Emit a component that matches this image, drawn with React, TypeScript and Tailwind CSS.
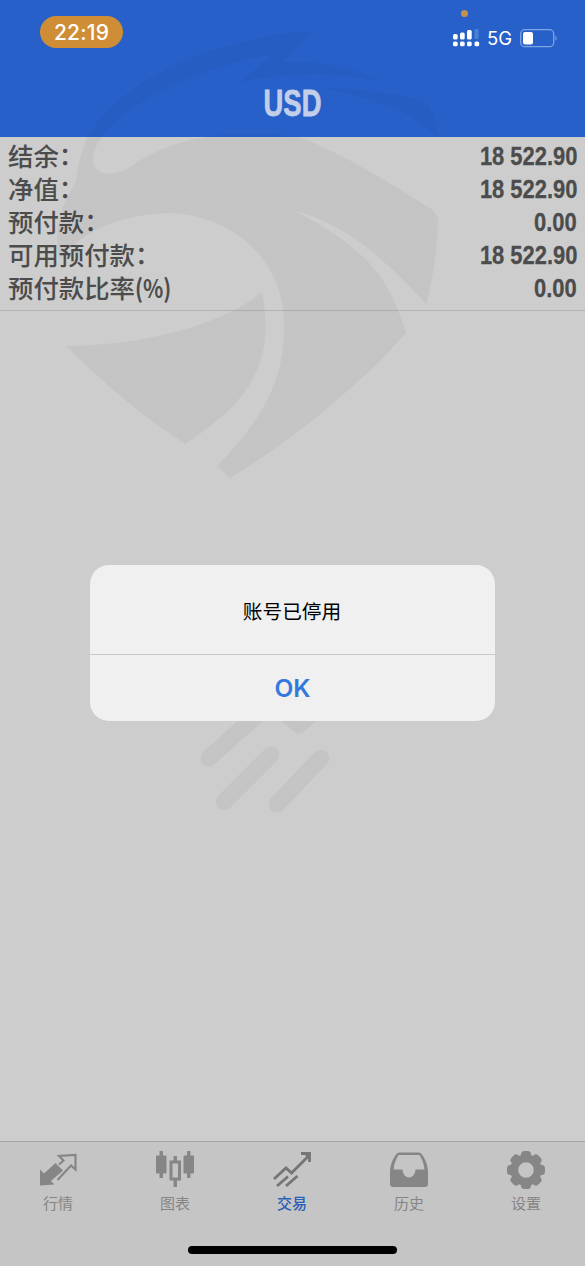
import React from 'react';

interface AccountRow {
  label: string;
  suffix: string;
  value: string;
}

const rows: AccountRow[] = [
  { label: '结余', suffix: '：', value: '18 522.90' },
  { label: '净值', suffix: '：', value: '18 522.90' },
  { label: '预付款', suffix: '：', value: '0.00' },
  { label: '可用预付款', suffix: '：', value: '18 522.90' },
  { label: '预付款比率', suffix: '(%)', value: '0.00' },
];

const QuotesIcon: React.FC = () => (
  <svg width="40" height="40" viewBox="0 2 40 40" fill="none">
    <path d="M2 21.5L6 25.5L17.5 15L25 22.5L13 33L16.5 36.5L2 37.5Z" fill="#868686" />
    <path d="M19.5 32L33 17.5L37.5 21.5V7L21 8L25.5 12.5L21 16.5" stroke="#868686" strokeWidth="2.2" />
  </svg>
);

const ChartIcon: React.FC = () => (
  <svg width="40" height="40" viewBox="0 2 40 40" fill="none">
    <path d="M6.25 3V30M33.75 3V30M20.25 8V14M20.25 32V39" stroke="#868686" strokeWidth="3.4" />
    <rect x="1" y="7.500" width="10.5" height="18" rx="1" fill="#868686" />
    <rect x="28.5" y="7.500" width="10.5" height="18" rx="1" fill="#868686" />
    <rect x="16" y="14" width="8.5" height="17" stroke="#868686" strokeWidth="3" />
  </svg>
);

const TradeIcon: React.FC = () => (
  <svg width="40" height="40" viewBox="0 2 40 40" fill="none" stroke="#757575" strokeWidth="2.8">
    <path d="M2 31L14 20L19.5 25L37 7.5M29 5.5H37.5V14M5 38L16 28.5M14 38L25.5 28" />
    <path d="M31 5H38V12Z" fill="#757575" stroke="none" />
  </svg>
);

const HistoryIcon: React.FC = () => (
  <svg width="40" height="40" viewBox="0 2 40 40" fill="#868686">
    <path
      fillRule="evenodd"
      d="M7.5 6Q8.2 4.5 10 4.5H30Q31.8 4.5 32.5 6C36.5 11 39 18 39 24V36Q39 39 36 39H4Q1 39 1 36V24C1 18 3.5 11 7.5 6ZM9.5 7C7 11 5 16 4.5 21.5H13.5C14 32 26 32 26.5 21.5H35.5C35 16 33 11 30.5 7Z"
    />
  </svg>
);

const SettingsIcon: React.FC = () => (
  <svg width="40" height="40" viewBox="-20 -20 40 40">
    <circle r="11.8" fill="none" stroke="#868686" strokeWidth="8" />
    {[0, 45, 90, 135, 180, 225, 270, 315].map((angle) => (
      <rect key={angle} x="-5" y="-19" width="10" height="7" rx="3.5" fill="#868686" transform={`rotate(${angle})`} />
    ))}
  </svg>
);

const tabs = [
  { label: '行情', icon: <QuotesIcon />, active: false },
  { label: '图表', icon: <ChartIcon />, active: false },
  { label: '交易', icon: <TradeIcon />, active: true },
  { label: '历史', icon: <HistoryIcon />, active: false },
  { label: '设置', icon: <SettingsIcon />, active: false },
];

const StatusBar: React.FC = () => (
  <div className="flex h-[70px] items-start justify-between pl-10 pr-[26px]">
    <div className="mt-4 flex h-8 w-[83px] items-center justify-center rounded-full bg-[#cf8d35] pt-px font-['Inter','Liberation_Sans',sans-serif] text-[21px] font-medium tracking-[0.2px] text-white">
      22:19
    </div>
    <div className="flex flex-col">
      <div className="ml-2 mt-[10px] h-[7px] w-[7px] rounded-full bg-[#c2914f]" />
      <div className="mt-[9px] flex h-6 items-center">
        <svg width="27" height="18" viewBox="0 0 27 18" fill="#fff">
          <rect x="0" y="5" width="4.7" height="5.5" rx="1.5" />
          <rect x="7" y="3.5" width="4.7" height="7" rx="1.5" />
          <rect x="14" y="1" width="4.7" height="9.5" rx="1.5" />
          <rect x="21.5" y="0" width="4" height="10" rx="1" fill="#4a80d4" />
          <rect x="0" y="12.5" width="4.7" height="4.7" rx="1.5" />
          <rect x="7" y="12.5" width="4.7" height="4.7" rx="1.5" />
          <rect x="14" y="12.5" width="4.7" height="4.7" rx="1.5" />
          <rect x="21.5" y="12.5" width="4.7" height="4.7" rx="1.5" />
        </svg>
        <span className="ml-[7px] w-[26px] pt-px font-['Inter','Liberation_Sans',sans-serif] text-[18.5px] text-white">5G</span>
        <svg className="ml-[7px]" width="39" height="19" viewBox="0 0 39 19" fill="none">
          <rect x="0.7" y="0.7" width="33" height="17" rx="4" stroke="#7ea5e2" strokeWidth="1.3" />
          <rect x="3" y="3" width="10" height="12.5" rx="2" fill="#fff" />
          <path d="M35.5 6.5Q38 9.2 35.5 12Z" fill="#7ea5e2" />
        </svg>
      </div>
    </div>
  </div>
);

// Faint logo laid over the whole screen, lighter where it crosses the header
const Watermark: React.FC = () => (
  <svg className="pointer-events-none absolute inset-0" width="585" height="1266" viewBox="0 0 585 1266">
    <defs>
      <linearGradient id="logo-fade" gradientUnits="userSpaceOnUse" x1="0" y1="0" x2="0" y2="1266">
        <stop offset="0.1082" stopColor="#000" stopOpacity="0.03" />
        <stop offset="0.1082" stopColor="#000" stopOpacity="0.042" />
      </linearGradient>
    </defs>
    <g fill="url(#logo-fade)">
      <path d="M312 31C225 36 120 75 86 140C79 158 78 170 75 184C60 205 53 235 60 260C85 225 135 213 173 213C240 218 284 265 284 325C285 380 262 420 217 466L230 478C300 435 365 380 406 333C390 280 370 250 295 211C350 225 390 265 426 304C433 280 438 245 438 218L433 210C385 180 345 155 302 138C235 128 175 135 130 167C112 179 88 175 94 153C105 115 180 72 273 54L240 82C290 72 340 73 383 82C355 68 320 60 283 62Z" />
      <path d="M320 88C355 88 400 92 428 104C433 112 437 125 437 137C420 118 380 98 320 88Z" />
      <path d="M66 346C150 345 225 323 262 292C273 350 262 395 185 444C140 415 100 380 66 346Z" />
      <path
        d="M209 758L290 685M271 755L224 802M321 758L277 804M275 704L299 725L350 680"
        fill="none"
        stroke="url(#logo-fade)"
        strokeWidth="17"
        strokeLinecap="round"
        strokeLinejoin="round"
      />
    </g>
  </svg>
);

const AlertDialog: React.FC = () => (
  <div className="absolute inset-0 flex justify-center pt-[565px]">
    <div className="flex h-[156px] w-[405px] flex-col overflow-hidden rounded-[19px] bg-[#f0f0f0]">
      <div className="flex h-[90px] items-center justify-center border-b border-[#c9c9c9] pr-px pt-[3px] text-[19.7px] text-black">
        账号已停用
      </div>
      <button className="flex-1 pt-px font-['Inter','Liberation_Sans',sans-serif] text-[24.5px] font-semibold text-[#3478dc]">
        OK
      </button>
    </div>
  </div>
);

export default function App() {
  return (
    <div className="relative flex h-[1266px] w-[585px] flex-col overflow-hidden bg-[#cdcdcd] font-['Noto_Sans_CJK_SC',sans-serif]">
      <header className="h-[137px] bg-[#2660c8]">
        <StatusBar />
        <h1 className="flex h-[67px] scale-x-[0.74] items-center justify-center pt-px font-['Liberation_Sans',sans-serif] text-[37px] font-bold text-[#c3cfe8] [-webkit-text-stroke:0.8px_#c3cfe8]">
          USD
        </h1>
      </header>

      <main className="flex-1">
        <div className="h-[174px] border-b border-[#b3b3b3] px-2 pt-[3px]">
          {rows.map((row) => (
            <div key={row.label} className="flex h-[33px] items-center justify-between text-[#4c4c4c]">
              <span className="-mt-[2px] text-[25.4px] font-medium leading-[33px]">
                {row.label}
                <span
                  className={
                    row.suffix === '：'
                      ? 'inline-block -translate-y-px'
                      : 'inline-block origin-left scale-x-[0.83] font-bold'
                  }
                >
                  {row.suffix}
                </span>
              </span>
              <span className="origin-right scale-x-[0.86] font-['Liberation_Sans',sans-serif] text-[25.5px] font-bold leading-[33px] [-webkit-text-stroke:0.3px_#4c4c4c]">
                {row.value}
              </span>
            </div>
          ))}
        </div>
      </main>

      <nav className="flex h-[125px] flex-col justify-between border-t border-[#a5a5a5] bg-[#c5c5c5]">
        <div className="grid grid-cols-5 pt-2">
          {tabs.map((tab) => (
            <div key={tab.label} className="flex flex-col items-center pr-[2px]">
              {tab.icon}
              <span
                className={
                  tab.active
                    ? 'mt-[3px] pl-px text-[15px] font-medium leading-5 text-[#2b60b8]'
                    : 'mt-[3px] pl-px text-[15px] leading-5 text-[#858585]'
                }
              >
                {tab.label}
              </span>
            </div>
          ))}
        </div>
        <div className="mb-3 h-2 w-[209px] self-center rounded-full bg-black" />
      </nav>

      <Watermark />
      <AlertDialog />
    </div>
  );
}
